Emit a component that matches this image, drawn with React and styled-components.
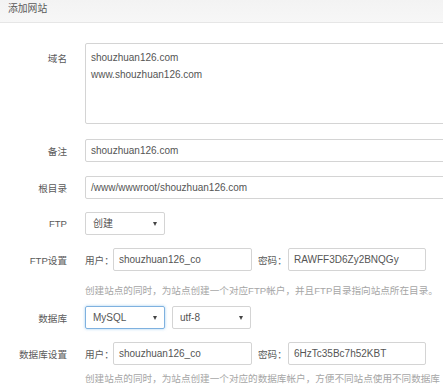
import React from "react";
import styled, { createGlobalStyle } from "styled-components";

const GlobalStyle = createGlobalStyle`
  html, body {
    margin: 0;
    padding: 0;
    background: #fff;
    overflow: hidden;
  }
  body {
    font-family: "Liberation Sans", Arial, "Noto Sans CJK SC", sans-serif;
    color: #555;
  }
`;

const Page = styled.div`
  width: 443px;
  height: 389px;
  overflow: hidden;
`;

const Header = styled.div`
  height: 23px;
  padding: 3px 0 0 8px;
  box-sizing: border-box;
  font-size: 9.8px;
  line-height: 11px;
  color: #5a5a5a;
  background: linear-gradient(#f3f3f3, #f7f7f7);
  border-bottom: 1px solid #e6e6e6;
`;

const Form = styled.div`
  padding-top: 20px;
  display: flex;
  flex-direction: column;
`;

const Row = styled.div`
  display: flex;
  align-items: ${(p) => (p.$top ? "flex-start" : "center")};
  margin-top: ${(p) => p.$mt || 0}px;
  height: ${(p) => p.$h || 23}px;
`;

const Label = styled.div`
  width: 67px;
  flex: none;
  text-align: right;
  font-size: 9.6px;
  color: #5a5a5a;
  margin-right: 18px;
  padding-top: ${(p) => (p.$top ? "8px" : "0")};
  white-space: nowrap;
`;

const TextArea = styled.div`
  flex: none;
  width: 400px;
  height: 81px;
  box-sizing: border-box;
  border: 1px solid #d4d4d4;
  border-radius: 2px;
  padding: 5px 5px;
  font-size: 10px;
  line-height: 17px;
  color: #555;
`;

const Input = styled.div`
  flex: none;
  width: ${(p) => p.$w}px;
  height: 23px;
  box-sizing: border-box;
  border: 1px solid #d4d4d4;
  border-radius: 2px;
  padding: 0 5px;
  font-size: 10px;
  line-height: 21px;
  color: #555;
  white-space: nowrap;
  overflow: hidden;
`;

const Select = styled.div`
  flex: none;
  width: ${(p) => p.$w}px;
  height: 23px;
  box-sizing: border-box;
  border: 1px solid ${(p) => (p.$focus ? "#7fb1df" : "#d4d4d4")};
  box-shadow: ${(p) => (p.$focus ? "0 0 3px rgba(102,175,233,.6)" : "none")};
  border-radius: 2px;
  padding: 0 7px;
  font-size: 10px;
  line-height: 21px;
  color: #555;
  display: flex;
  align-items: center;
  justify-content: space-between;
  margin-right: 7px;
`;

const Caret = styled.span`
  width: 0;
  height: 0;
  border-left: 2.5px solid transparent;
  border-right: 2.5px solid transparent;
  border-top: 4px solid #444;
`;

const Inline = styled.span`
  flex: none;
  font-size: 9.6px;
  color: #5a5a5a;
  width: ${(p) => p.$w}px;
  margin-left: ${(p) => p.$ml || 0}px;
  white-space: nowrap;
`;

const Hint = styled.div`
  margin-top: ${(p) => p.$mt}px;
  padding-left: 85px;
  height: 16px;
  line-height: 16px;
  font-size: 9.6px;
  color: #a6a6a6;
  white-space: nowrap;
  overflow: hidden;
`;

export default function App() {
  return (
    <Page>
      <GlobalStyle />
      <Header>添加网站</Header>
      <Form>
        <Row $top $h={81}>
          <Label $top>域名</Label>
          <TextArea>
            shouzhuan126.com
            <br />
            www.shouzhuan126.com
          </TextArea>
        </Row>
        <Row $mt={15}>
          <Label>备注</Label>
          <Input $w={400}>shouzhuan126.com</Input>
        </Row>
        <Row $mt={14}>
          <Label>根目录</Label>
          <Input $w={400}>/www/wwwroot/shouzhuan126.com</Input>
        </Row>
        <Row $mt={13}>
          <Label>FTP</Label>
          <Select $w={80}>
            创建 <Caret />
          </Select>
        </Row>
        <Row $mt={13}>
          <Label>FTP设置</Label>
          <Inline $w={28}>用户：</Inline>
          <Input $w={139}>shouzhuan126_co</Input>
          <Inline $w={30} $ml={6}>密码：</Inline>
          <Input $w={138}>RAWFF3D6Zy2BNQGy</Input>
        </Row>
        <Hint $mt={12}>创建站点的同时，为站点创建一个对应FTP帐户，并且FTP目录指向站点所在目录。</Hint>
        <Row $mt={7}>
          <Label>数据库</Label>
          <Select $w={80} $focus>
            MySQL <Caret />
          </Select>
          <Select $w={79}>
            utf-8 <Caret />
          </Select>
        </Row>
        <Row $mt={13}>
          <Label>数据库设置</Label>
          <Inline $w={28}>用户：</Inline>
          <Input $w={139}>shouzhuan126_co</Input>
          <Inline $w={30} $ml={6}>密码：</Inline>
          <Input $w={138}>6HzTc35Bc7h52KBT</Input>
        </Row>
        <Hint $mt={6}>创建站点的同时，为站点创建一个对应的数据库帐户，方便不同站点使用不同数据库</Hint>
      </Form>
    </Page>
  );
}
